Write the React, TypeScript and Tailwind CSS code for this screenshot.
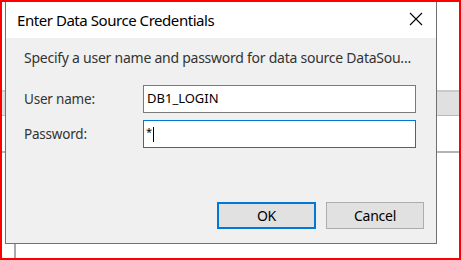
export default function App() {
  const font = { fontFamily: '"Noto Sans", "Open Sans", sans-serif' };

  return (
    <div className="w-[461px] h-[260px] border-2 border-[#ff0000] bg-white overflow-hidden" style={font}>
      <div className="relative w-full h-full">
        {/* table behind the dialog */}
        <div className="absolute left-0 right-0 top-[88px] h-[26px] bg-[#e0e0e0] border-t-2 border-b border-t-[#cacaca] border-b-[#b9b9b9]" />
        <div className="absolute left-0 right-0 top-[149px] h-[2px] bg-[#b4b4b4]" />
        <div className="absolute left-[12px] top-[240px] bottom-0 w-[2px] bg-[#a9a9a9]" />

        {/* dialog */}
        <div className="absolute left-[3px] top-0 w-[432px] h-[242px] flex flex-col border-x border-b border-[#707070] bg-[#f0f0f0]">
          <div className="h-[36px] bg-white flex items-center justify-between pl-[11px] pr-[13px]">
            <span className="text-[15px] text-black tracking-[-0.45px]">Enter Data Source Credentials</span>
            <svg width="14" height="14" viewBox="0 0 14 14" className="mt-[-2px]">
              <path d="M1 1 L13 13 M13 1 L1 13" stroke="#000" strokeWidth="1.1" fill="none" />
            </svg>
          </div>

          <div className="flex-1 flex flex-col pt-[11px] pl-[18px] pr-[19px] text-[14px] text-[#333] tracking-[-0.25px]">
            <div className="h-[18px] leading-[18px] whitespace-nowrap">
              Specify a user name and password for data source DataSou...
            </div>

            <div className="mt-[18px] flex items-center">
              <span className="w-[119px] text-[13.5px] tracking-[-0.2px]">User name:</span>
              <div className="w-[273px] h-[28px] border border-[#7a7a7a] bg-white flex items-center pl-[3px] text-black text-[13px] tracking-[0px]">
                DB1_LOGIN
              </div>
            </div>

            <div className="mt-[7px] flex items-center">
              <span className="w-[119px] text-[13.5px] tracking-[-0.2px]">Password:</span>
              <div className="w-[273px] h-[28px] border border-[#0078d7] bg-white flex items-center pl-[2px] text-black">
                <span className="text-[11px] mt-[-3px]">*</span>
                <span className="ml-[1px] w-[1px] h-[15px] bg-black" />
              </div>
            </div>

            <div className="flex-1" />

            <div className="flex justify-end gap-[10px] mr-[-7px] mb-[14px]">
              <button className="w-[99px] h-[27px] border-2 border-[#0078d7] bg-[#e1e1e1] text-black text-[14px]">OK</button>
              <button className="w-[98px] h-[27px] border border-[#adadad] bg-[#e1e1e1] text-black text-[14px]">Cancel</button>
            </div>
          </div>
        </div>
      </div>
    </div>
  );
}
